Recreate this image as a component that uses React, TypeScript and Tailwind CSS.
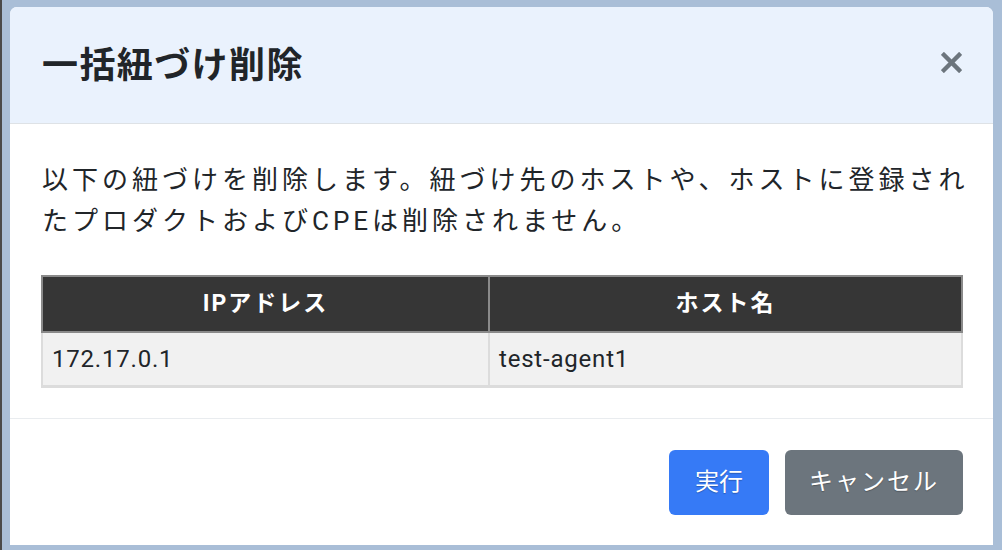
import React from 'react'

const rows = [{ ip: '172.17.0.1', host: 'test-agent1' }]

const App = () => {
  return (
    <div
      className="w-[1002px] h-[550px] bg-[#a9bed7] border-l-[2px] border-[#4a4a4a] pl-[8px] pt-[7px] pr-[9px] pb-[5px] overflow-hidden"
      style={{ fontFamily: 'Roboto, "Noto Sans CJK JP", sans-serif' }}
    >
      <div className="bg-white rounded-t-[7px] h-full flex flex-col">
        {/* header */}
        <div className="h-[117px] shrink-0 bg-[#eaf2fd] rounded-t-[7px] border-b border-[#dee2e6] pl-[32px] pr-[30px] flex items-center justify-between">
          <h2 className="text-[36px] font-bold text-[#212529] tracking-[1.4px] pt-[1px]">一括紐づけ削除</h2>
          <button className="text-[#6c757d] mr-[1px] mt-[-6px]">
            <svg width="21" height="21" viewBox="0 0 22 22">
              <path d="M3 3 L19 19 M19 3 L3 19" stroke="currentColor" strokeWidth="4.5" strokeLinecap="square" />
            </svg>
          </button>
        </div>

        {/* body */}
        <div className="pl-[31px] pr-[30px] pt-[36px] pb-[30px] border-b border-[#e9ecef]">
          <p className="text-[26px] leading-[41px] tracking-[4px] text-[#212529] pl-[1px] mr-[-14px]">
            以下の紐づけを削除します。紐づけ先のホストや、ホストに登録されたプロダクトおよびCPEは削除されません。
          </p>
          <table className="w-full mt-[33px] border-collapse">
            <thead>
              <tr className="bg-[#363636] text-white text-[23px] tracking-[2px]">
                <th className="h-[56px] border-2 border-[#8a8a8a] font-bold text-center w-[447px]">IPアドレス</th>
                <th className="h-[56px] border-2 border-[#8a8a8a] font-bold text-center">ホスト名</th>
              </tr>
            </thead>
            <tbody>
              {rows.map((r) => (
                <tr key={r.ip} className="bg-[#f1f1f1] text-[#212529] text-[24px] tracking-[0.8px]">
                  <td className="h-[54px] border-2 border-[#dcdcdc] border-b-[3px] px-[9px]">{r.ip}</td>
                  <td className="h-[54px] border-2 border-[#dcdcdc] border-b-[3px] px-[9px]">{r.host}</td>
                </tr>
              ))}
            </tbody>
          </table>
        </div>

        {/* footer */}
        <div className="flex-1 flex items-center justify-end gap-[16px] pr-[30px] pt-[1px]">
          <button className="w-[100px] h-[65px] rounded-[6px] bg-[#367af6] text-white text-[24px] [text-shadow:0_1px_1px_rgba(0,0,0,0.25)]">
            実行
          </button>
          <button className="w-[178px] h-[65px] rounded-[6px] bg-[#6c757d] text-white text-[24px] tracking-[2px] [text-shadow:0_1px_1px_rgba(0,0,0,0.25)]">
            キャンセル
          </button>
        </div>
      </div>
    </div>
  )
}

export default App
